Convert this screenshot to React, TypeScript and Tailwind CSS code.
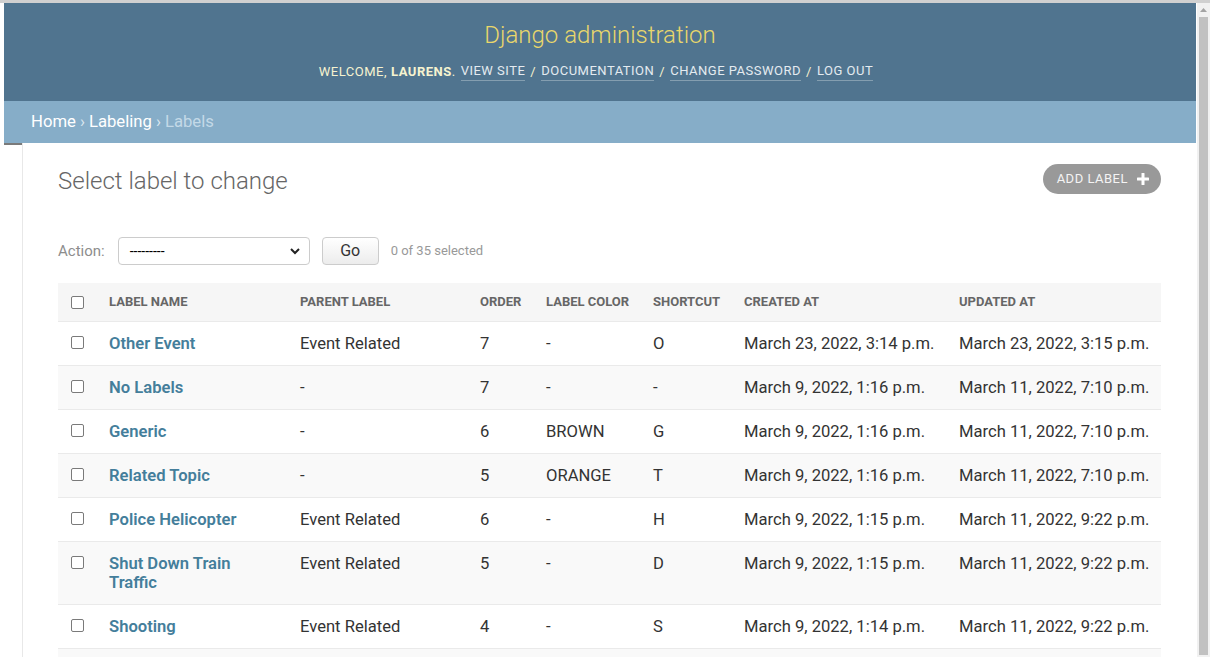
import React from "react";

const rows = [
  ["Other Event", "Event Related", "7", "-", "O", "March 23, 2022, 3:14 p.m.", "March 23, 2022, 3:15 p.m."],
  ["No Labels", "-", "7", "-", "-", "March 9, 2022, 1:16 p.m.", "March 11, 2022, 7:10 p.m."],
  ["Generic", "-", "6", "BROWN", "G", "March 9, 2022, 1:16 p.m.", "March 11, 2022, 7:10 p.m."],
  ["Related Topic", "-", "5", "ORANGE", "T", "March 9, 2022, 1:16 p.m.", "March 11, 2022, 7:10 p.m."],
  ["Police Helicopter", "Event Related", "6", "-", "H", "March 9, 2022, 1:15 p.m.", "March 11, 2022, 9:22 p.m."],
  ["Shut Down Train Traffic", "Event Related", "5", "-", "D", "March 9, 2022, 1:15 p.m.", "March 11, 2022, 9:22 p.m."],
  ["Shooting", "Event Related", "4", "-", "S", "March 9, 2022, 1:14 p.m.", "March 11, 2022, 9:22 p.m."],
];

function Box() {
  return <span className="block w-[13px] h-[13px] border border-[#7a7a7a] rounded-[2px] bg-white" />;
}

export default function App() {
  return (
    <div className="w-[1210px] h-[657px] overflow-hidden bg-white flex flex-col font-['Roboto',sans-serif]">
      <div className="h-[3px] bg-[#d0d0d0] shrink-0" />
      <div className="flex flex-1 min-h-0">
        <div className="w-[4px] shrink-0" />
        <div className="w-[1192px] shrink-0 flex flex-col">
          {/* Header */}
          <div className="h-[98px] bg-[#50748f] flex flex-col items-center">
            <div className="mt-[17px] text-[24px] leading-[30px] font-light text-[#e9d76b]">Django administration</div>
            <div className="mt-[12px] -ml-[8px] text-[13px] leading-[18px] tracking-[0.5px] uppercase text-[#f6f3cf] flex items-center">
              <span>Welcome, </span>
              <strong className="font-bold ml-[4px]">Laurens</strong>
              <span>.</span>
              <a className="ml-[5px] text-[#e4ebf0] border-b border-[rgba(255,255,255,0.3)]">View site</a>
              <span className="mx-[5px]">/</span>
              <a className="text-[#e4ebf0] border-b border-[rgba(255,255,255,0.3)]">Documentation</a>
              <span className="mx-[5px]">/</span>
              <a className="text-[#e4ebf0] border-b border-[rgba(255,255,255,0.3)]">Change password</a>
              <span className="mx-[5px]">/</span>
              <a className="text-[#e4ebf0] border-b border-[rgba(255,255,255,0.3)]">Log out</a>
            </div>
          </div>
          {/* Breadcrumbs */}
          <div className="h-[42px] bg-[#86adc8] flex items-center pl-[27px] text-[16.7px] text-white">
            <a>Home</a>
            <span className="mx-[4px] text-[#dbe8f0]">›</span>
            <a>Labeling</a>
            <span className="mx-[4px] text-[#dbe8f0]">›</span>
            <span className="text-[#c3d9e7]">Labels</span>
          </div>
          {/* Main */}
          <div className="flex flex-1 min-h-0">
            <div className="w-[19px] shrink-0 border-r border-[#e8e8e8] flex flex-col">
              <div className="h-[2px] bg-[#7a7a7a]" />
            </div>
            <div className="flex-1 px-[35px]">
              <div className="flex items-start justify-between">
                <h1 className="mt-[23px] text-[24px] leading-[30px] font-light text-[#666]">Select label to change</h1>
                <a className="mt-[21px] h-[30px] rounded-full bg-[#999] pl-[14px] pr-[12px] flex items-center text-[13px] tracking-[0.5px] uppercase text-[#f4f4f4]">
                  Add label
                  <svg width="12" height="12" viewBox="0 0 12 12" className="ml-[9px]">
                    <rect x="4.5" y="0" width="3" height="12" rx="0.6" fill="#fff" />
                    <rect x="0" y="4.5" width="12" height="3" rx="0.6" fill="#fff" />
                  </svg>
                </a>
              </div>
              <div className="mt-[41px] flex items-center h-[28px]">
                <span className="text-[15px] text-[#8d8d8d]">Action:</span>
                <div className="ml-[13px] w-[192px] h-[28px] border border-[#ccc] rounded-[4px] flex items-center justify-between pl-[11px] pr-[8px] bg-white">
                  <span className="text-[14px] text-black">---------</span>
                  <svg width="12" height="12" viewBox="0 0 12 12">
                    <path d="M2 4 L6 8 L10 4" stroke="#222" strokeWidth="2" fill="none" />
                  </svg>
                </div>
                <button className="ml-[12px] w-[57px] h-[28px] border border-[#ccc] rounded-[4px] bg-gradient-to-b from-white to-[#ececec] text-[16px] text-[#333]">Go</button>
                <span className="ml-[12px] text-[13px] text-[#999]">0 of 35 selected</span>
              </div>
              <table className="mt-[18px] w-full table-fixed border-collapse">
                <colgroup>
                  <col className="w-[39px]" />
                  <col className="w-[191px]" />
                  <col className="w-[180px]" />
                  <col className="w-[66px]" />
                  <col className="w-[107px]" />
                  <col className="w-[91px]" />
                  <col className="w-[215px]" />
                  <col className="w-[214px]" />
                </colgroup>
                <thead>
                  <tr className="bg-[#f6f6f6] border-b border-[#eaeaea]">
                    <th className="pl-[13px] py-[12px] align-middle"><Box /></th>
                    {["Label name", "Parent label", "Order", "Label color", "Shortcut", "Created at", "Updated at"].map((h) => (
                      <th key={h} className="px-[12px] py-[11px] text-left text-[13px] leading-[16px] font-bold uppercase text-[#666] whitespace-nowrap">{h}</th>
                    ))}
                  </tr>
                </thead>
                <tbody>
                  {rows.map((r, i) => (
                    <tr key={i} className={(i % 2 === 1 ? "bg-[#f9f9f9] " : "bg-white ") + "border-b border-[#eaeaea]"}>
                      <td className="pl-[13px] pt-[14px] align-top"><Box /></td>
                      <th className="px-[12px] pt-[12px] pb-[12px] align-top text-left text-[16.6px] leading-[19px] font-semibold text-[#447e9b]">{r[0]}</th>
                      {r.slice(1).map((c, j) => (
                        <td key={j} className="px-[12px] pt-[12px] pb-[12px] align-top text-[16.6px] leading-[19px] text-[#333] whitespace-nowrap">{c}</td>
                      ))}
                    </tr>
                  ))}
                  <tr className="bg-[#f9f9f9]">
                    <td colSpan={8} className="h-[44px]" />
                  </tr>
                </tbody>
              </table>
            </div>
          </div>
        </div>
        <div className="w-[1px] shrink-0" />
        <div className="w-[13px] shrink-0 bg-[#f1f1f1] flex flex-col items-center">
          <svg width="7" height="4" viewBox="0 0 7 4" className="mt-[5px]">
            <path d="M0 4 L3.5 0 L7 4 Z" fill="#a3a3a3" />
          </svg>
          <div className="mt-[5px] w-[9px] flex-1 mb-[2px] bg-[#c1c1c1]" />
        </div>
      </div>
    </div>
  );
}
